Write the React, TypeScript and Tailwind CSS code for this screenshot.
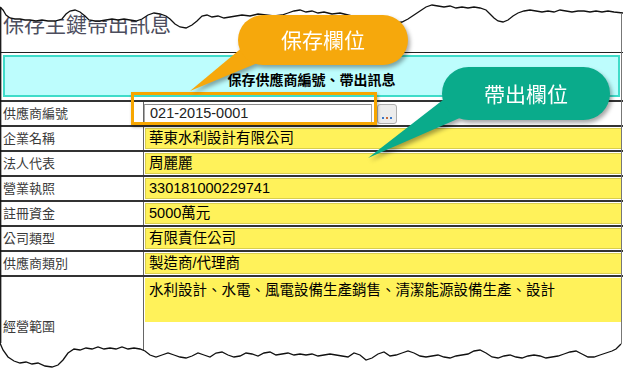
import React from "react";

const topPts: [number, number][] = [
  [0, 7], [3, 10], [6, 15], [10, 18], [15, 19], [20, 19], [25, 20], [30, 20], [36, 21], [42, 20], [48, 21], [55, 21], [62, 19], [66, 14], [70, 11], [75, 10], [80, 12], [85, 16], [89, 20], [95, 21], [100, 21], [106, 20], [112, 19], [118, 20], [124, 19], [130, 20], [136, 21], [142, 19], [148, 15], [154, 13], [160, 14], [166, 16], [170, 19], [175, 24], [180, 27], [186, 28], [192, 25], [197, 21], [202, 16], [207, 15], [212, 17], [218, 16], [224, 18], [230, 17], [236, 16], [242, 15], [250, 16], [258, 14], [266, 15], [274, 16], [282, 15], [288, 13], [294, 11], [300, 10], [306, 12], [312, 11], [318, 13], [324, 12], [332, 14], [340, 13], [348, 15], [356, 17], [364, 18], [372, 19], [380, 20], [388, 22], [396, 23], [402, 22], [408, 19], [414, 15], [420, 11], [426, 7], [432, 5], [438, 6], [444, 7], [450, 6], [456, 8], [462, 7], [468, 8], [474, 7], [480, 8], [486, 10], [490, 14], [494, 18], [498, 21], [503, 22], [508, 20], [513, 16], [518, 13], [524, 11], [530, 10], [536, 11], [542, 12], [548, 11], [554, 12], [560, 10], [566, 11], [572, 12], [578, 11], [584, 11], [590, 12], [596, 11], [602, 12], [608, 11], [614, 12], [623, 13],
];

const botPts: [number, number][] = [
  [0, 343], [3, 350], [8, 357], [14, 361], [20, 363], [26, 362], [32, 364], [38, 363], [45, 366], [52, 367], [58, 365], [63, 360], [68, 353], [74, 349], [80, 350], [86, 348], [92, 349], [98, 347], [104, 349], [110, 348], [116, 349], [122, 347], [128, 349], [134, 348], [140, 349], [145, 351], [150, 355], [156, 357], [162, 355], [168, 353], [174, 355], [180, 357], [186, 358], [192, 356], [198, 353], [204, 355], [210, 357], [216, 353], [222, 352], [228, 355], [234, 357], [240, 356], [246, 353], [252, 354], [258, 356], [264, 353], [270, 352], [276, 355], [282, 354], [288, 353], [294, 355], [300, 354], [306, 355], [312, 354], [318, 356], [324, 355], [330, 354], [336, 355], [342, 356], [348, 357], [354, 353], [360, 355], [366, 360], [372, 358], [378, 354], [384, 352], [390, 356], [396, 355], [402, 353], [408, 351], [414, 353], [420, 356], [426, 357], [432, 356], [438, 355], [444, 357], [450, 358], [456, 356], [462, 355], [468, 354], [474, 351], [480, 350], [486, 353], [492, 357], [498, 358], [504, 356], [510, 355], [516, 357], [522, 358], [528, 356], [534, 355], [540, 356], [546, 358], [552, 357], [558, 356], [564, 354], [570, 352], [576, 351], [582, 354], [588, 357], [594, 357], [600, 355], [606, 353], [612, 351], [616, 349], [619, 346], [621, 344],
];

const toStr = (p: [number, number][]) => p.map(([x, y]) => `${x},${y}`).join(" ");

function Row({ label, value }: { label: string; value: string }) {
  return (
    <div className="flex h-[25px] border-t-2 border-[#333]">
      <div className="w-[144px] border-r border-[#666] pl-[3px] flex items-center text-[13px] text-[#3a3a3a]">
        {label}
      </div>
      <div className="flex-1 p-px">
        <div className="h-full bg-[#fff25a] border border-[#d9ce4e] pl-[3px] flex items-center text-[14.5px] text-black">
          {value}
        </div>
      </div>
    </div>
  );
}

export default function App() {
  const font = "font-['Liberation_Sans','Noto_Sans_CJK_TC',sans-serif]";
  return (
    <div className={`relative w-[623px] h-[369px] overflow-hidden bg-white ${font}`}>
      <div className="h-[52px] pl-[3px] pt-[11px] text-[21px] leading-[24px] text-[#4d4e5e] font-['Noto_Sans_CJK_TC',sans-serif]">
        保存主鍵帶出訊息
      </div>
      <div className="h-px bg-[#222]" />
      <div className="mt-[2px] mx-[3px] h-[42px] border-2 border-[#3fdcc9] bg-[#bdfdfd] flex items-center justify-center pt-[6px] text-[14px] font-bold text-black font-['Noto_Sans_CJK_TC',sans-serif]">
        保存供應商編號、帶出訊息
      </div>
      <div className="mt-[3px]">
        <div className="flex h-[25px] border-t-2 border-[#333]">
          <div className="w-[144px] border-r border-[#666] pl-[3px] flex items-center text-[13px] text-[#3a3a3a]">
            供應商編號
          </div>
          <div className="flex-1 flex items-center">
            <div className="w-[228px] h-[20px] border border-[#a9a9a9] border-t-[#8a8a8a] bg-white pl-[5px] flex items-center text-[14.5px] text-[#222]">
              021-2015-0001
            </div>
            <div className="ml-[5px] w-[20px] h-[20px] border border-[#adadad] rounded-[3px] bg-[#ececec] flex items-end justify-center pb-[4px]">
              <span className="flex gap-[2px]">
                <span className="w-[2px] h-[2px] bg-[#3a78c8]" />
                <span className="w-[2px] h-[2px] bg-[#c86a3a]" />
                <span className="w-[2px] h-[2px] bg-[#3a78c8]" />
              </span>
            </div>
          </div>
        </div>
        <Row label="企業名稱" value="華東水利設計有限公司" />
        <Row label="法人代表" value="周麗麗" />
        <Row label="營業執照" value="330181000229741" />
        <Row label="註冊資金" value="5000萬元" />
        <Row label="公司類型" value="有限責任公司" />
        <Row label="供應商類別" value="製造商/代理商" />
        <div className="flex h-[102px] border-t-2 border-[#333]">
          <div className="w-[144px] border-r border-[#666] pl-[3px] flex items-center text-[13px] text-[#3a3a3a]">
            經營範圍
          </div>
          <div className="flex-1 p-px">
            <div className="h-[44px] bg-[#fff25a] pl-[4px] pt-[2px] text-[14.5px] text-black leading-[20px]">
              水利設計、水電、風電設備生產銷售、清潔能源設備生產、設計
            </div>
          </div>
        </div>
      </div>

      {/* torn paper edges */}
      <svg className="absolute inset-0 pointer-events-none" width="623" height="369" viewBox="0 0 623 369">
        <polygon points={`0,0 ${toStr(topPts)} 623,0`} fill="#fff" />
        <polyline points={toStr(topPts)} fill="none" stroke="#111" strokeWidth="1.3" />
        <polygon points={`0,369 ${toStr(botPts)} 623,344 623,369`} fill="#fff" />
        <polyline points={toStr(botPts)} fill="none" stroke="#111" strokeWidth="1.3" />
        <line x1="0.7" y1="7" x2="0.7" y2="343" stroke="#111" strokeWidth="1.3" />
        <line x1="621.5" y1="13" x2="621.5" y2="344" stroke="#777" strokeWidth="1" />
      </svg>

      {/* orange highlight box */}
      <div className="absolute left-[131px] top-[92px] w-[246px] h-[33px] border-[3px] border-[#f7a600] shadow-[1px_2px_3px_rgba(0,0,0,0.3)]" />

      {/* orange callout */}
      <div className="absolute inset-0 pointer-events-none drop-shadow-[2px_3px_2px_rgba(0,0,0,0.35)]">
        <svg className="absolute inset-0" width="623" height="369" viewBox="0 0 623 369">
          <polygon points="244,46 190,91 260,62" fill="#f6a80c" />
        </svg>
        <div className="absolute left-[238px] top-[15px] w-[170px] h-[50px] rounded-[25px] bg-[#f6a80c] flex items-center justify-center text-white text-[21px] font-['Noto_Sans_CJK_TC',sans-serif]">
          保存欄位
        </div>
      </div>

      {/* green callout */}
      <div className="absolute inset-0 pointer-events-none drop-shadow-[2px_3px_2px_rgba(0,0,0,0.35)]">
        <svg className="absolute inset-0" width="623" height="369" viewBox="0 0 623 369">
          <polygon points="448,96 368,158 462,117" fill="#0aab8b" />
        </svg>
        <div className="absolute left-[442px] top-[67px] w-[168px] h-[53px] rounded-[27px] bg-[#0aab8b] flex items-center justify-center text-white text-[21px] font-['Noto_Sans_CJK_TC',sans-serif]">
          帶出欄位
        </div>
      </div>
    </div>
  );
}
